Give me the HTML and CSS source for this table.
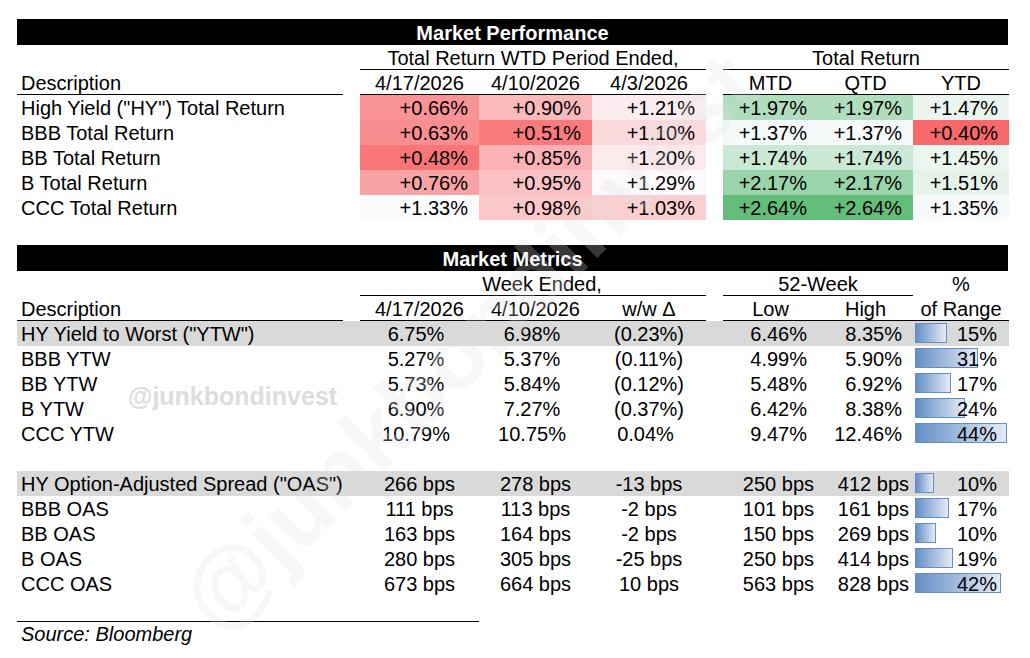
FILE: index.html
```html
<!DOCTYPE html>
<html>
<head>
<meta charset="utf-8">
<title>Market Performance</title>
<link rel="stylesheet" href="styles.css">
</head>
<body>
<div class="sheet">
  <div class="banner">Market Performance</div>
  <table class="grid">
    <colgroup>
      <col class="w-desc"><col class="w-gap"><col class="w-c1"><col class="w-c2"><col class="w-c3"><col class="w-gap"><col class="w-c4"><col class="w-c5"><col class="w-c6">
    </colgroup>
    <tr>
      <td></td><td></td>
      <td colspan="3" class="c ul">Total Return WTD Period Ended,</td>
      <td></td>
      <td colspan="3" class="c ul">Total Return</td>
    </tr>
    <tr>
      <td class="desc ul">Description</td><td></td>
      <td class="c ul">4/17/2026</td><td class="c ul">4/10/2026</td><td class="c ul">4/3/2026</td>
      <td></td>
      <td class="c ul">MTD</td><td class="c ul">QTD</td><td class="c ul">YTD</td>
    </tr>
    <tr>
      <td class="desc">High Yield ("HY") Total Return</td><td></td>
      <td class="r" style="background:#F99395">+0.66%</td>
      <td class="r" style="background:#FABABC">+0.90%</td>
      <td class="r" style="background:#FCECEF">+1.21%</td>
      <td></td>
      <td class="r" style="background:#B0DDBE">+1.97%</td>
      <td class="r" style="background:#B0DDBE">+1.97%</td>
      <td class="r" style="background:#EAF5EF">+1.47%</td>
    </tr>
    <tr>
      <td class="desc">BBB Total Return</td><td></td>
      <td class="r" style="background:#F98E90">+0.63%</td>
      <td class="r" style="background:#F97B7D">+0.51%</td>
      <td class="r" style="background:#FBDADD">+1.10%</td>
      <td></td>
      <td class="r" style="background:#F5F9F9">+1.37%</td>
      <td class="r" style="background:#F5F9F9">+1.37%</td>
      <td class="r" style="background:#F8696B">+0.40%</td>
    </tr>
    <tr>
      <td class="desc">BB Total Return</td><td></td>
      <td class="r" style="background:#F87678">+0.48%</td>
      <td class="r" style="background:#FAB2B4">+0.85%</td>
      <td class="r" style="background:#FCEAED">+1.20%</td>
      <td></td>
      <td class="r" style="background:#CBE8D4">+1.74%</td>
      <td class="r" style="background:#CBE8D4">+1.74%</td>
      <td class="r" style="background:#ECF6F1">+1.45%</td>
    </tr>
    <tr>
      <td class="desc">B Total Return</td><td></td>
      <td class="r" style="background:#FAA3A6">+0.76%</td>
      <td class="r" style="background:#FAC2C4">+0.95%</td>
      <td class="r" style="background:#FCF9FC">+1.29%</td>
      <td></td>
      <td class="r" style="background:#99D4AA">+2.17%</td>
      <td class="r" style="background:#99D4AA">+2.17%</td>
      <td class="r" style="background:#E5F3EB">+1.51%</td>
    </tr>
    <tr>
      <td class="desc">CCC Total Return</td><td></td>
      <td class="r" style="background:#FAFBFD">+1.33%</td>
      <td class="r" style="background:#FBC7C9">+0.98%</td>
      <td class="r" style="background:#FBCFD1">+1.03%</td>
      <td></td>
      <td class="r" style="background:#63BE7B">+2.64%</td>
      <td class="r" style="background:#63BE7B">+2.64%</td>
      <td class="r" style="background:#F7FAFB">+1.35%</td>
    </tr>
  </table>

  <div class="spacer"></div>

  <div class="banner">Market Metrics</div>
  <table class="grid">
    <colgroup>
      <col class="w-desc"><col class="w-gap"><col class="w-c1"><col class="w-c2"><col class="w-c3"><col class="w-gap"><col class="w-c4"><col class="w-c5"><col class="w-c6">
    </colgroup>
    <tr>
      <td></td><td></td>
      <td colspan="3" class="c ul shift">Week Ended,</td>
      <td></td>
      <td colspan="2" class="c ul">52-Week</td>
      <td class="c">%</td>
    </tr>
    <tr>
      <td class="desc ul">Description</td><td></td>
      <td class="c ul">4/17/2026</td><td class="c ul">4/10/2026</td><td class="c ul">w/w Δ</td>
      <td></td>
      <td class="c ul">Low</td><td class="c ul">High</td><td class="c ul">of Range</td>
    </tr>
    <tr class="gray">
      <td class="desc">HY Yield to Worst ("YTW")</td><td></td>
      <td class="c p">6.75%</td><td class="c p">6.98%</td><td class="c">(0.23%)</td>
      <td></td>
      <td class="r">6.46%</td><td class="r">8.35%</td>
      <td class="rng"><span class="bar" style="width:32px"></span><span class="pv">15%</span></td>
    </tr>
    <tr>
      <td class="desc">BBB YTW</td><td></td>
      <td class="c p">5.27%</td><td class="c p">5.37%</td><td class="c">(0.11%)</td>
      <td></td>
      <td class="r">4.99%</td><td class="r">5.90%</td>
      <td class="rng"><span class="bar" style="width:63px"></span><span class="pv">31%</span></td>
    </tr>
    <tr>
      <td class="desc">BB YTW</td><td></td>
      <td class="c p">5.73%</td><td class="c p">5.84%</td><td class="c">(0.12%)</td>
      <td></td>
      <td class="r">5.48%</td><td class="r">6.92%</td>
      <td class="rng"><span class="bar" style="width:36px"></span><span class="pv">17%</span></td>
    </tr>
    <tr>
      <td class="desc">B YTW</td><td></td>
      <td class="c p">6.90%</td><td class="c p">7.27%</td><td class="c">(0.37%)</td>
      <td></td>
      <td class="r">6.42%</td><td class="r">8.38%</td>
      <td class="rng"><span class="bar" style="width:50px"></span><span class="pv">24%</span></td>
    </tr>
    <tr>
      <td class="desc">CCC YTW</td><td></td>
      <td class="c p">10.79%</td><td class="c p">10.75%</td><td class="c p">0.04%</td>
      <td></td>
      <td class="r">9.47%</td><td class="r">12.46%</td>
      <td class="rng"><span class="bar" style="width:92px"></span><span class="pv">44%</span></td>
    </tr>
    <tr class="blank"><td colspan="9"></td></tr>
    <tr class="gray">
      <td class="desc">HY Option-Adjusted Spread ("OAS")</td><td></td>
      <td class="c">266 bps</td><td class="c">278 bps</td><td class="c">-13 bps</td>
      <td></td>
      <td class="r bp">250 bps</td><td class="r bp">412 bps</td>
      <td class="rng"><span class="bar" style="width:19px"></span><span class="pv">10%</span></td>
    </tr>
    <tr>
      <td class="desc">BBB OAS</td><td></td>
      <td class="c">111 bps</td><td class="c">113 bps</td><td class="c">-2 bps</td>
      <td></td>
      <td class="r bp">101 bps</td><td class="r bp">161 bps</td>
      <td class="rng"><span class="bar" style="width:34px"></span><span class="pv">17%</span></td>
    </tr>
    <tr>
      <td class="desc">BB OAS</td><td></td>
      <td class="c">163 bps</td><td class="c">164 bps</td><td class="c">-2 bps</td>
      <td></td>
      <td class="r bp">150 bps</td><td class="r bp">269 bps</td>
      <td class="rng"><span class="bar" style="width:21px"></span><span class="pv">10%</span></td>
    </tr>
    <tr>
      <td class="desc">B OAS</td><td></td>
      <td class="c">280 bps</td><td class="c">305 bps</td><td class="c">-25 bps</td>
      <td></td>
      <td class="r bp">250 bps</td><td class="r bp">414 bps</td>
      <td class="rng"><span class="bar" style="width:38px"></span><span class="pv">19%</span></td>
    </tr>
    <tr>
      <td class="desc">CCC OAS</td><td></td>
      <td class="c">673 bps</td><td class="c">664 bps</td><td class="c">10 bps</td>
      <td></td>
      <td class="r bp">563 bps</td><td class="r bp">828 bps</td>
      <td class="rng"><span class="bar" style="width:86px"></span><span class="pv">42%</span></td>
    </tr>
    <tr class="blank"><td colspan="9"></td></tr>
    <tr>
      <td colspan="3" class="desc source">Source: Bloomberg</td>
      <td colspan="6"></td>
    </tr>
  </table>

  <div class="wm-small">@junkbondinvest</div>
  <div class="wm-big">@junkbondinvest</div>
</div>
</body>
</html>
```

FILE: styles.css
```css
html, body {
  margin: 0;
  padding: 0;
  background: #ffffff;
}

body {
  font-family: "Liberation Sans", Arial, sans-serif;
  font-size: 20px;
  color: #000000;
}

.sheet {
  position: relative;
  width: 992px;
  padding: 19px 0 0 17px;
  overflow: hidden;
  height: 639px;
}

.banner {
  width: 991px;
  height: 26px;
  line-height: 28px;
  background: #000000;
  color: #ffffff;
  font-weight: bold;
  text-align: center;
}

.spacer {
  height: 25px;
}

.grid {
  width: 992px;
  border-collapse: collapse;
  table-layout: fixed;
}

.grid td {
  height: 24px;
  padding: 1px 0 0 0;
  line-height: 24px;
  white-space: nowrap;
  overflow: visible;
}

.w-desc { width: 326px; }
.w-gap { width: 17px; }
.w-c1 { width: 119px; }
.w-c2 { width: 113px; }
.w-c3 { width: 114px; }
.w-c4 { width: 95px; }
.w-c5 { width: 95px; }
.w-c6 { width: 96px; }

.grid td.desc {
  padding-left: 4px;
  text-align: left;
}

.grid td.ul {
  box-shadow: inset 0 -1px 0 #000000;
}

.grid td.c {
  text-align: center;
}

.grid td.c.p {
  padding-right: 7px;
}

.grid td.shift {
  padding-left: 18px;
}

.grid td.r {
  text-align: right;
  padding-right: 11px;
}

.grid td.r.bp {
  padding-right: 4px;
}

.grid tr.gray td {
  background: #D9D9D9;
}

.grid td.rng {
  position: relative;
  text-align: right;
  padding-right: 12px;
}

.bar {
  position: absolute;
  left: 2px;
  top: 2px;
  height: 20px;
  box-sizing: border-box;
  border: 1px solid #638EC6;
  background: linear-gradient(to right, #638EC6, #E4EBF6);
}

.pv {
  position: relative;
}

.grid td.source {
  font-style: italic;
  box-shadow: inset 0 1px 0 #000000;
}

.wm-small {
  position: absolute;
  left: 128px;
  top: 384px;
  font-size: 25px;
  line-height: 25px;
  font-weight: bold;
  color: #DDDDDD;
  pointer-events: none;
}

.wm-big {
  position: absolute;
  left: 468px;
  top: 342px;
  transform: translate(-50%, -50%) rotate(-45deg);
  font-size: 92px;
  line-height: 96px;
  font-weight: bold;
  white-space: nowrap;
  color: rgba(225, 225, 225, 0.25);
  pointer-events: none;
}
```
